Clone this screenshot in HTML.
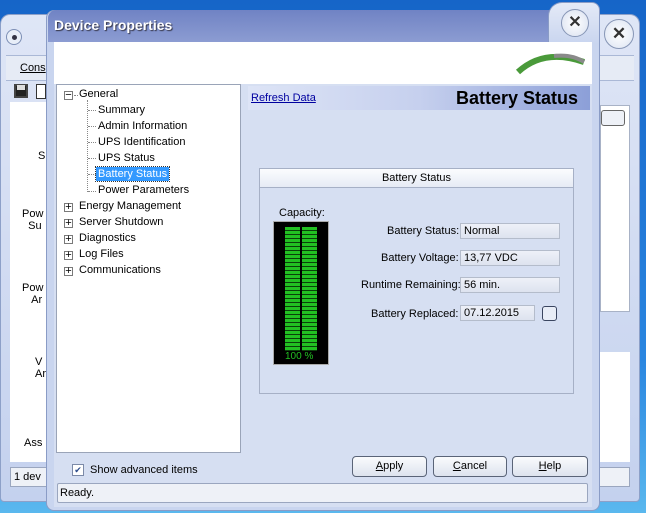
<!DOCTYPE html>
<html><head><meta charset="utf-8"><style>
*{margin:0;padding:0;box-sizing:border-box}
body{width:646px;height:513px;overflow:hidden;position:relative;font-family:"Liberation Sans",sans-serif;font-size:11px;color:#000;background:linear-gradient(180deg,#1665c8 0%,#2a86e0 70%,#5ab8ee 100%)}
.a{position:absolute}
.txt{white-space:nowrap}
.field{position:absolute;background:linear-gradient(#eef1f8,#dde3ef);border:1px solid #b4bccb;height:16px;padding-left:3px;line-height:15px;font-size:11px}
.btn{position:absolute;height:21px;border:1px solid #5a6478;border-radius:4px;background:linear-gradient(#fafbfd,#dde3ee);text-align:center;line-height:19px;font-size:11px}
.tree div{position:absolute;white-space:nowrap;font-size:11px}
.pm{position:absolute;width:9px;height:9px;border:1px solid #7a7a7a;background:#fff;font-size:9px;line-height:7px;text-align:center}
</style></head><body>
<div class="a" style="left:0;top:14px;width:640px;height:488px;background:linear-gradient(#dfe6f6,#c4d1ee);border-radius:10px 10px 4px 4px;border:1px solid #8da0c8"></div>
<div class="a" style="left:6px;top:29px;width:16px;height:16px;border-radius:50%;background:#e8eef8;border:1px solid #7d8fb5"></div>
<div class="a" style="left:12px;top:35px;width:5px;height:5px;border-radius:50%;background:#334"></div>
<div class="a" style="left:604px;top:19px;width:30px;height:30px;border-radius:50%;background:radial-gradient(#fff,#dbe3f2);border:1px solid #8796b6;text-align:center;line-height:28px;font-size:17px;font-weight:bold;color:#333">✕</div>
<div class="a" style="left:6px;top:55px;width:628px;height:26px;background:#e6ebf5;border-top:1px solid #aab8d6;border-bottom:1px solid #aab8d6"></div>
<div class="a txt" style="left:20px;top:62px;text-decoration:underline">Cons</div>
<div class="a" style="left:14px;top:84px;width:14px;height:14px;background:#222;border:2px solid #444"></div>
<div class="a" style="left:17px;top:85px;width:8px;height:5px;background:#ddd"></div>
<div class="a" style="left:36px;top:84px;width:10px;height:15px;border:1px solid #333;background:#fff"></div>
<div class="a" style="left:10px;top:102px;width:40px;height:360px;background:#fff"></div>
<div class="a txt" style="left:38px;top:150px;font-size:11px">S</div>
<div class="a txt" style="left:22px;top:208px">Pow<br>&nbsp;&nbsp;Su</div>
<div class="a txt" style="left:22px;top:282px">Pow<br>&nbsp;&nbsp;&nbsp;Ar</div>
<div class="a txt" style="left:35px;top:356px">V<br>Ar</div>
<div class="a txt" style="left:24px;top:437px">Ass</div>
<div class="a" style="left:10px;top:467px;width:620px;height:20px;background:#eef1f7;border:1px solid #9aa6bf"></div>
<div class="a txt" style="left:14px;top:471px">1 dev</div>
<div class="a" style="left:600px;top:105px;width:30px;height:207px;background:#fff;border:1px solid #a8b2c6"></div>
<div class="a" style="left:601px;top:110px;width:24px;height:16px;border:1px solid #666;border-radius:3px;background:#eef1f7"></div>
<div class="a" style="left:600px;top:352px;width:30px;height:110px;background:#fff"></div>

<div class="a" style="left:46px;top:10px;width:554px;height:501px;background:#c9d5ef;border:1px solid #8a9cc6;border-radius:8px"></div>
<div class="a" style="left:48px;top:10px;width:514px;height:32px;background:linear-gradient(#7083c4,#8c9cd2);border-radius:8px 0 0 0"></div>
<div class="a" style="left:548px;top:2px;width:52px;height:42px;background:linear-gradient(#e4eaf7,#c9d5ef);border-radius:14px 8px 0 0;border:1px solid #8a9cc6;border-bottom:none"></div>
<div class="a" style="left:561px;top:9px;width:28px;height:28px;border-radius:50%;background:radial-gradient(#fff,#d8e0f0);border:1px solid #8796b6;text-align:center;line-height:26px;font-size:16px;font-weight:bold;color:#333">✕</div>
<div class="a txt" style="left:54px;top:17px;color:#fff;font-weight:bold;font-size:14px;text-shadow:1px 1px 1px #334">Device Properties</div>
<div class="a" style="left:54px;top:42px;width:538px;height:465px;background:#d6dff2"></div>
<div class="a" style="left:54px;top:42px;width:538px;height:42px;background:#fff"></div>
<svg class="a" style="left:514px;top:50px" width="72" height="26"><path d="M4 22 Q30 -2 70 12" stroke="#4a9a3a" stroke-width="6" fill="none"/><path d="M40 6 Q58 4 70 12" stroke="#8a8a8a" stroke-width="4" fill="none"/></svg>

<div class="a tree" style="left:56px;top:84px;width:185px;height:369px;background:#fff;border:1px solid #9aa4b8">
<div class="pm" style="left:7px;top:6px">−</div><div style="left:22px;top:3px">General</div>
<div style="left:17px;top:10px;width:4px;border-top:1px dotted #888"></div>
<div style="left:30px;top:15px;width:0;height:92px;border-left:1px dotted #888"></div>
<div style="left:31px;top:25px;width:8px;border-top:1px dotted #888"></div>
<div style="left:31px;top:41px;width:8px;border-top:1px dotted #888"></div>
<div style="left:31px;top:57px;width:8px;border-top:1px dotted #888"></div>
<div style="left:31px;top:73px;width:8px;border-top:1px dotted #888"></div>
<div style="left:31px;top:89px;width:8px;border-top:1px dotted #888"></div>
<div style="left:31px;top:106px;width:8px;border-top:1px dotted #888"></div>
<div style="left:41px;top:19px">Summary</div>
<div style="left:41px;top:35px">Admin Information</div>
<div style="left:41px;top:51px">UPS Identification</div>
<div style="left:41px;top:67px">UPS Status</div>
<div style="left:39px;top:82px;background:#3399ff;color:#fff;padding:1px 2px;outline:1px dotted #333">Battery Status</div>
<div style="left:41px;top:99px">Power Parameters</div>
<div class="pm" style="left:7px;top:118px">+</div><div style="left:22px;top:115px">Energy Management</div>
<div class="pm" style="left:7px;top:134px">+</div><div style="left:22px;top:131px">Server Shutdown</div>
<div class="pm" style="left:7px;top:150px">+</div><div style="left:22px;top:147px">Diagnostics</div>
<div class="pm" style="left:7px;top:166px">+</div><div style="left:22px;top:163px">Log Files</div>
<div class="pm" style="left:7px;top:182px">+</div><div style="left:22px;top:179px">Communications</div>
</div>

<div class="a" style="left:248px;top:86px;width:342px;height:24px;background:linear-gradient(90deg,#dde4f6 0%,#c6d0ee 50%,#8c9fd8 100%)"></div>
<div class="a txt" style="left:251px;top:92px;color:#0000a0;text-decoration:underline">Refresh Data</div>
<div class="a txt" style="left:456px;top:88px;font-weight:bold;font-size:18px">Battery Status</div>

<div class="a" style="left:259px;top:168px;width:315px;height:226px;border:1px solid #a6b0c6;background:#d6dff2"></div>
<div class="a" style="left:260px;top:169px;width:313px;height:19px;background:linear-gradient(#fbfcfe,#e6ebf5);border-bottom:1px solid #a6b0c6;text-align:center;line-height:18px">Battery Status</div>
<div class="a txt" style="left:279px;top:207px">Capacity:</div>
<div class="a" style="left:273px;top:221px;width:56px;height:144px;background:#000;border:1px solid #aaa"></div>
<div class="a" style="left:285px;top:227px;width:32px;height:124px;background:repeating-linear-gradient(#22c022 0 3px,#0a400a 3px 4px)"></div>
<div class="a" style="left:300px;top:227px;width:2px;height:124px;background:#000"></div>
<div class="a txt" style="left:285px;top:351px;color:#22c022;font-size:10px">100 %</div>

<div class="a txt" style="left:387px;top:225px">Battery Status:</div>
<div class="field" style="left:460px;top:223px;width:100px">Normal</div>
<div class="a txt" style="left:381px;top:252px">Battery Voltage:</div>
<div class="field" style="left:460px;top:250px;width:100px">13,77 VDC</div>
<div class="a txt" style="left:361px;top:279px">Runtime Remaining:</div>
<div class="field" style="left:460px;top:277px;width:100px">56 min.</div>
<div class="a txt" style="left:371px;top:308px">Battery Replaced:</div>
<div class="field" style="left:460px;top:305px;width:75px">07.12.2015</div>
<div class="a" style="left:542px;top:306px;width:15px;height:15px;border:1px solid #3a4560;border-radius:3px;background:#e8edf7"></div>

<div class="a" style="left:72px;top:464px;width:12px;height:12px;border:1px solid #7c8aa8;background:#fff;font-size:9px;line-height:10px;text-align:center;color:#2a4a8a">✔</div>
<div class="a txt" style="left:90px;top:464px">Show advanced items</div>
<div class="btn" style="left:352px;top:456px;width:75px"><u>A</u>pply</div>
<div class="btn" style="left:433px;top:456px;width:74px"><u>C</u>ancel</div>
<div class="btn" style="left:512px;top:456px;width:76px"><u>H</u>elp</div>
<div class="a" style="left:57px;top:483px;width:531px;height:20px;background:#eef1f7;border:1px solid #9aa6bf;border-radius:2px"></div>
<div class="a txt" style="left:60px;top:487px">Ready.</div>
</body></html>
